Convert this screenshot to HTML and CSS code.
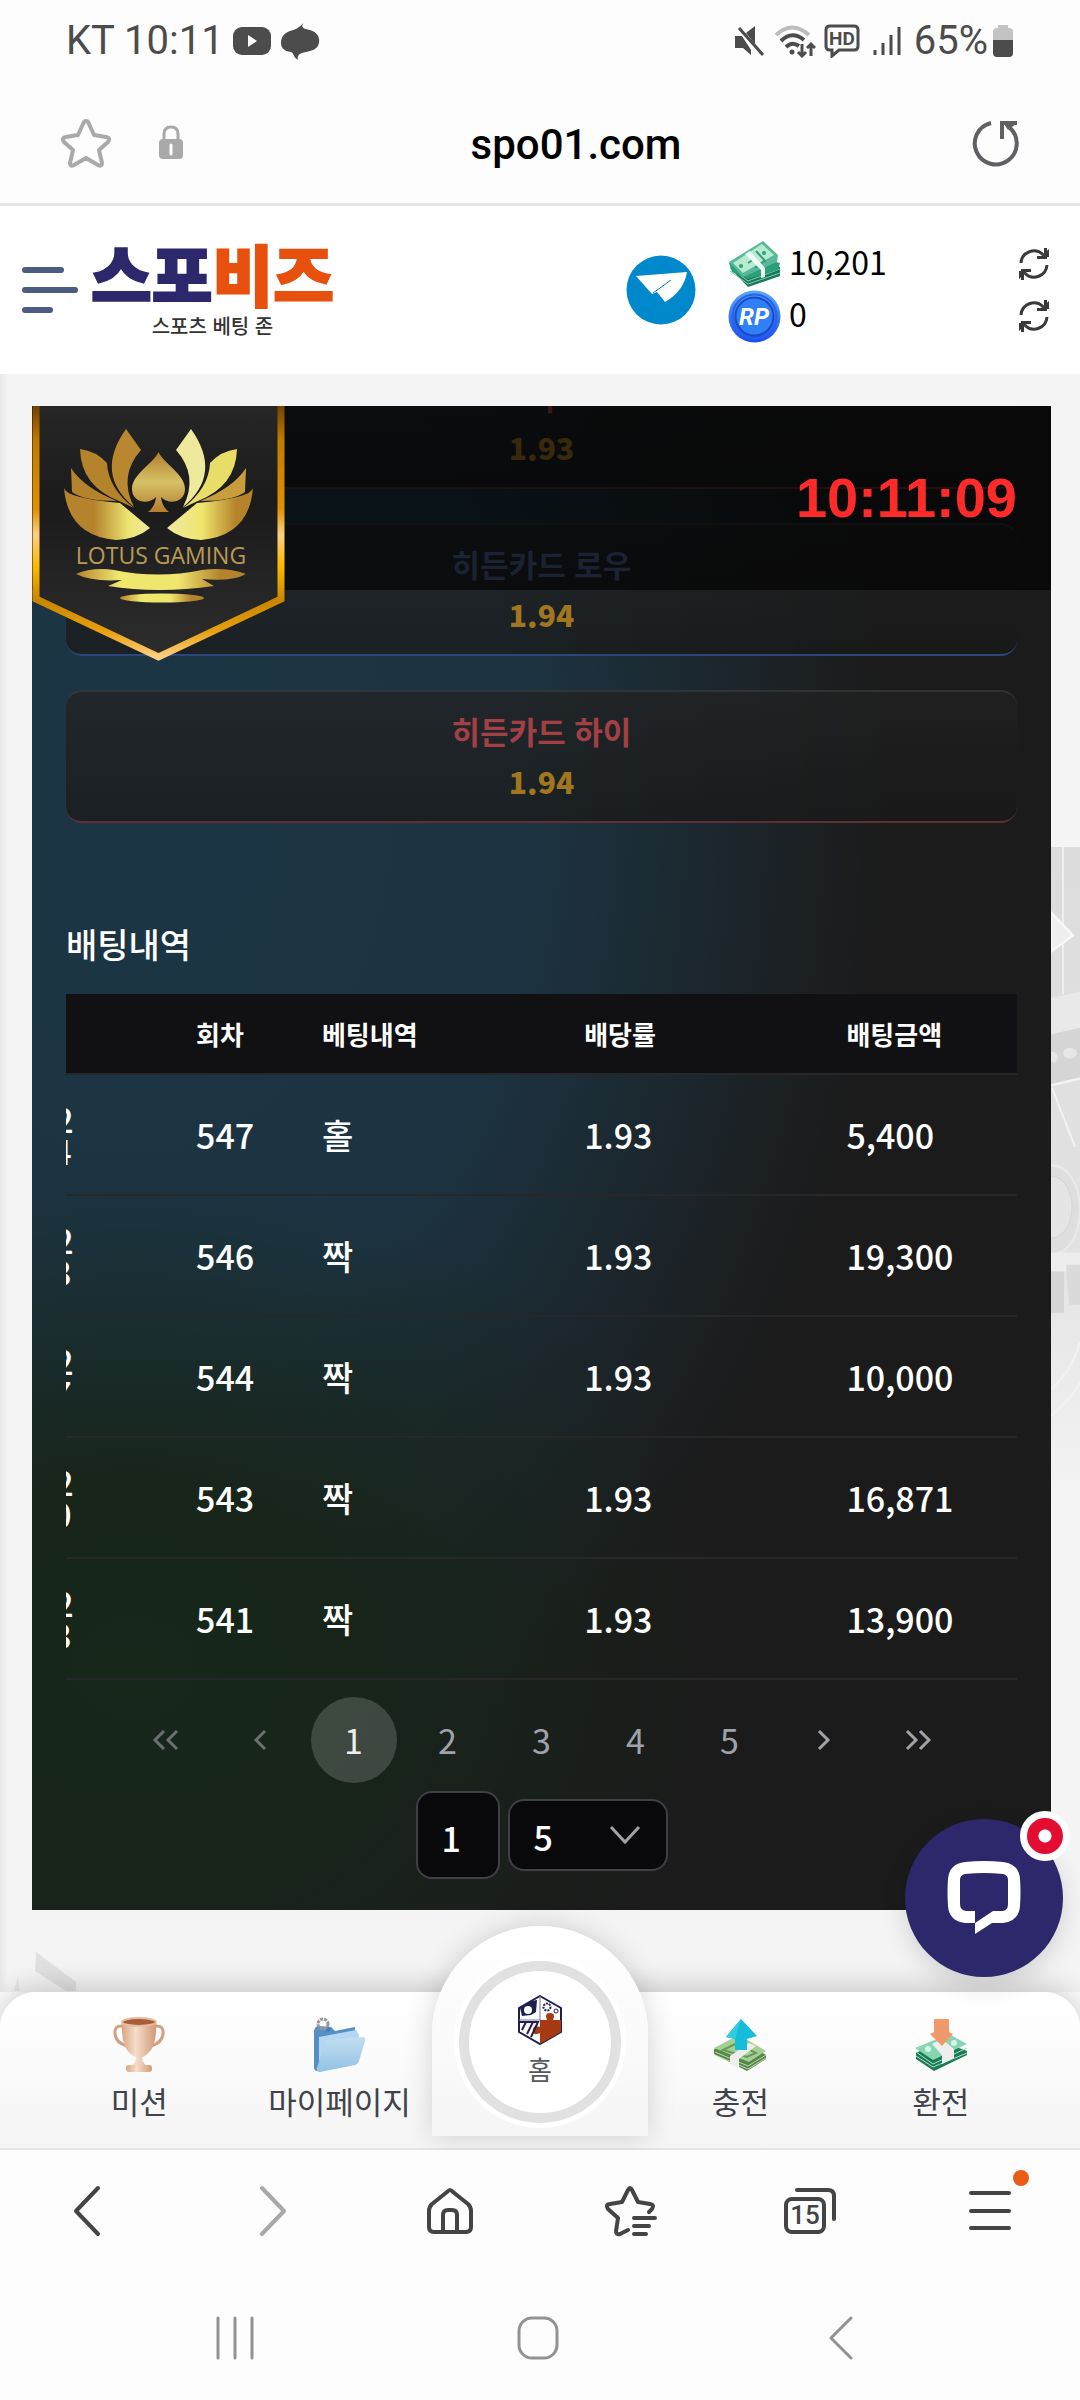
FILE: index.html
```html
<!DOCTYPE html>
<html lang="ko">
<head>
<meta charset="utf-8">
<meta name="viewport" content="width=device-width, initial-scale=1">
<title>스포비즈</title>
<link rel="stylesheet" href="styles.css">
</head>
<body>
<svg class="defs" aria-hidden="true">
  <symbol id="refresh" viewBox="0 0 32 32">
    <path d="M3 15A13 13 0 0 1 25 6.500M29 17A13 13 0 0 1 7 25.500" fill="none" stroke="#3a3a3a" stroke-width="3"/>
    <path d="M29 0V11H19V8H26V0zM3 32V21H13V24H6V32z" fill="#3a3a3a"/>
    <path d="M22 9L31 9L31 1zM10 23L1 23L1 31z" fill="#3a3a3a"/>
  </symbol>
</svg>

<div class="status-bar">
  <div class="status-group">
    <span>KT 10:11</span>
    <svg width="40" height="38" viewBox="0 0 40 38"><rect x="1" y="5" width="38" height="28" rx="9" fill="#4c4c4c"/><path d="M16 13L25 19L16 25z" fill="#fff"/></svg>
    <svg width="40" height="38" viewBox="0 0 40 38"><path d="M23 1C21 5 23 7 30 8C37 10 40 15 39 21C37 29 29 29 22 31C19 32 17 34 18 38C13 35 14 31 11 30C4 29 1 26 1 21C1 14 5 11 10 9C17 7 20 5 23 1z" fill="#4c4c4c"/></svg>
  </div>
  <div class="status-group">
    <svg width="32" height="34" viewBox="0 0 32 34"><path d="M1 12H8L17 26V31L9 24H1zM12 9L21 2V20z" fill="#4c4c4c"/><path d="M5 4L29 31" stroke="#4c4c4c" stroke-width="3"/></svg>
    <svg width="42" height="34" viewBox="0 0 42 34" fill="none" stroke-width="4"><path d="M2 11Q18 -4 35 11" stroke="#bdbdbd"/><path d="M7 17Q18 6 30 16M12 23Q18 17 25 22" stroke="#4c4c4c"/><circle cx="18" cy="28" r="2.500" fill="#4c4c4c"/><path d="M28 20V32M24 28L28 32L32 28M37 32V20M33 24L37 20L41 24" stroke="#4c4c4c" stroke-width="3"/></svg>
    <svg width="36" height="34" viewBox="0 0 36 34"><path d="M6 2H30Q34 2 34 6V22Q34 26 30 26H15L8 32V26H6Q2 26 2 22V6Q2 2 6 2z" fill="none" stroke="#4c4c4c" stroke-width="3"/><text x="18" y="21" text-anchor="middle" class="hd">HD</text></svg>
    <svg class="s-signal" width="30" height="34" viewBox="0 0 30 34" stroke="#4c4c4c" stroke-width="3"><path d="M3 26V31M11 19V31M19 11V31M27 3V31"/></svg>
    <span>65%</span>
    <svg class="s-battery" width="22" height="34" viewBox="0 0 22 34"><path d="M1 17V8Q1 4 5 4H6V1H16V4H17Q21 4 21 8V17z" fill="#c3c3c3"/><path d="M1 16H21V29Q21 33 17 33H5Q1 33 1 29z" fill="#4c4c4c"/></svg>
  </div>
</div>

<div class="address-bar">
  <div class="address-icons">
    <button type="button" aria-label="북마크"><svg width="52" height="50" viewBox="0 0 52 50"><path d="M26 3Q28 3 29 6L34 17L46 19Q51 20 48 24L39 32L42 45Q42 49 38 47L26 40L14 47Q10 49 10 45L13 32L4 24Q1 20 6 19L18 17L23 6Q24 3 26 3z" fill="none" stroke="#a9a9a9" stroke-width="4" stroke-linejoin="round"/></svg></button>
    <svg width="26" height="36" viewBox="0 0 26 36"><path d="M6 16V9Q6 2 13 2T20 9V16" fill="none" stroke="#a9a9a9" stroke-width="3"/><rect x="1" y="14" width="24" height="20" rx="4" fill="#a9a9a9"/><path d="M13 20V29" stroke="#fff" stroke-width="3" stroke-linecap="round"/></svg>
  </div>
  <div class="url">spo01.com</div>
  <button type="button" aria-label="새로고침"><svg width="48" height="48" viewBox="0 0 48 48" fill="none" stroke="#5f6064" stroke-width="4"><path d="M19 4A21 21 0 1 0 38 9" /><path d="M30 20V4H45"/><path d="M32 5H44L36 11z" fill="#5f6064" stroke="none"/></svg></button>
</div>

<header class="site-header">
  <button type="button" class="menu" aria-label="메뉴"><i></i><i></i><i></i></button>
  <a href="#" class="brand"><span class="brand-name">스포<b>비즈</b></span><span class="brand-sub">스포츠 베팅 존</span></a>
  <a href="#" class="telegram" aria-label="텔레그램"><svg width="70" height="70" viewBox="0 0 70 70"><circle cx="35" cy="35" r="34.500" fill="#0088cc"/><path d="M10 21L61 17Q58 36 39 47L31 37L26 39z" fill="#fff"/><path d="M27 38L45 25" stroke="#0088cc" stroke-width="1"/></svg></a>
  <div class="balances">
    <div class="balance">
      <svg width="53" height="48" viewBox="0 0 53 48">
        <path d="M2 28L20 47L52 36V27L22 20z" fill="#17795c"/><path d="M2 31L20 44L52 33M2 28L20 41L52 29" fill="none" stroke="#7fd0ab" stroke-width="1"/>
        <path d="M1 23L17 14L52 23L50 30L20 39L4 32z" fill="#2b9f7c"/>
        <path d="M1 22L35 1L50 15L49 22L15 37z" fill="#58b897"/><path d="M5 23L34 4L46 15L15 33z" fill="#b5ecd0"/>
        <path d="M20 23L28 18M27 28L36 21M28 11L38 22" stroke="#3c9b7c" stroke-width="2"/><circle cx="36" cy="13" r="2" fill="#2b9f7c"/><circle cx="13" cy="26" r="2" fill="#2b9f7c"/>
        <path d="M17 14L22 11L37 28V37L33 38V30z" fill="#eef9f4"/>
      </svg>
      <span>10,201</span>
      <button type="button" aria-label="머니 새로고침"><svg width="32" height="32"><use href="#refresh"/></svg></button>
    </div>
    <div class="balance">
      <svg width="53" height="53" viewBox="0 0 53 53">
        <defs><linearGradient id="coin" x2="0" y2="1"><stop offset="0" stop-color="#5aa5ff"/><stop offset="1" stop-color="#1a4bf0"/></linearGradient></defs>
        <circle cx="26.500" cy="26.500" r="26" fill="url(#coin)"/><circle cx="26.500" cy="26.500" r="22" fill="none" stroke="#2462e8" stroke-width="2"/><circle cx="26.500" cy="26.500" r="19" fill="#2f80f7" stroke="#1c49c4" stroke-width="2"/>
        <text x="26" y="35" text-anchor="middle" class="coin-text">RP</text>
      </svg>
      <span>0</span>
      <button type="button" aria-label="포인트 새로고침"><svg width="32" height="32"><use href="#refresh"/></svg></button>
    </div>
  </div>
</header>

<main class="page">
  <svg class="casino-art" width="29" height="660" viewBox="0 0 29 493" preserveAspectRatio="none" aria-hidden="true">
    <defs><linearGradient id="art" x2="0" y2="1"><stop offset="0" stop-color="#dcdcdc"/><stop offset=".6" stop-color="#e2e2e2"/><stop offset="1" stop-color="#f4f4f4"/></linearGradient></defs>
    <rect width="29" height="493" fill="url(#art)"/>
    <path d="M12 0V110" stroke="#efefef" stroke-width="2"/><path d="M0 49L22 66L0 78z" fill="#eee" stroke="#f8f8f8" stroke-width="2"/>
    <path d="M0 113L29 108V135L0 140z" fill="#e9e9e9"/><path d="M0 140L29 135V174L0 178z" fill="#d5d5d5"/>
    <ellipse cx="19" cy="154" rx="7" ry="4" fill="#e6e6e6"/><ellipse cx="2" cy="157" rx="5" ry="4" fill="#e6e6e6"/>
    <path d="M1 180L24 224M0 178L29 173" stroke="#f2f2f2" stroke-width="2"/>
    <ellipse cx="2" cy="271" rx="27" ry="33" fill="#dedede" stroke="#e9e9e9" stroke-width="2"/><ellipse cx="1" cy="269" rx="20" ry="23" fill="#e5e5e5" stroke="#d5d5d5"/>
    <path d="M0 303H29V317H0z" fill="#ededed"/><path d="M0 317H13V348H0z" fill="#d6d6d6"/><path d="M15 312H29V342H18z" fill="#dadada"/>
    <path d="M0 405Q20 392 29 370M0 425Q20 412 29 400" fill="none" stroke="#f2f2f2" stroke-width="2"/>
  </svg>
  <svg class="arrow-art" width="80" height="40" viewBox="0 0 80 40" aria-hidden="true"><path d="M36 0L76 30V39H66L35 19z" fill="#e0e0e0"/><path d="M18 24L14 39H20z" fill="#e6e6e6"/></svg>

  <section class="game">
    <div class="game-body">
      <div class="bets">
        <button type="button" class="bet red"><span>짝</span><b>1.93</b></button>
        <button type="button" class="bet blue"><span>히든카드 로우</span><b>1.94</b></button>
        <button type="button" class="bet red"><span>히든카드 하이</span><b>1.94</b></button>
      </div>
      <h2>배팅내역</h2>
      <div class="table-scroll">
        <table>
          <colgroup><col class="c-date"><col class="c-round"><col class="c-pick"><col class="c-odds"><col class="c-amount"></colgroup>
          <thead><tr><th></th><th>회차</th><th>베팅내역</th><th>배당률</th><th>배팅금액</th></tr></thead>
          <tbody>
            <tr><td class="date">05-02 10:04</td><td>547</td><td>홀</td><td>1.93</td><td>5,400</td></tr>
            <tr><td class="date">05-02 10:03</td><td>546</td><td>짝</td><td>1.93</td><td>19,300</td></tr>
            <tr><td class="date">05-02 09:57</td><td>544</td><td>짝</td><td>1.93</td><td>10,000</td></tr>
            <tr><td class="date">05-02 09:50</td><td>543</td><td>짝</td><td>1.93</td><td>16,871</td></tr>
            <tr><td class="date">05-02 09:43</td><td>541</td><td>짝</td><td>1.93</td><td>13,900</td></tr>
          </tbody>
        </table>
      </div>
      <nav class="pager" aria-label="페이지">
        <button type="button" class="dim" aria-label="처음"><svg width="28" height="22" viewBox="0 0 28 22"><path d="M12 2L3 11L12 20M25 2L16 11L25 20"/></svg></button>
        <button type="button" class="dim" aria-label="이전"><svg width="14" height="22" viewBox="0 0 14 22"><path d="M12 2L3 11L12 20"/></svg></button>
        <button type="button" class="current">1</button>
        <button type="button">2</button>
        <button type="button">3</button>
        <button type="button">4</button>
        <button type="button">5</button>
        <button type="button" aria-label="다음"><svg width="14" height="22" viewBox="0 0 14 22"><path d="M2 2L11 11L2 20"/></svg></button>
        <button type="button" aria-label="마지막"><svg width="28" height="22" viewBox="0 0 28 22"><path d="M3 2L12 11L3 20M16 2L25 11L16 20"/></svg></button>
      </nav>
      <div class="page-size">
        <input type="text" value="1" aria-label="페이지 번호">
        <div class="select"><select aria-label="페이지당 행 수"><option>5</option></select><svg width="32" height="20" viewBox="0 0 32 20"><path d="M2 2L16 17L30 2" fill="none" stroke="#a1a1aa" stroke-width="3"/></svg></div>
      </div>
    </div>

    <div class="game-head"><time>10:11:09</time></div>
    <svg class="lotus" width="253" height="264" viewBox="0 0 253 264">
      <defs>
        <linearGradient id="rim" x2="0" y2="1"><stop offset="0" stop-color="#6b3a00"/><stop offset=".15" stop-color="#c27a00"/><stop offset=".42" stop-color="#e09000"/><stop offset=".52" stop-color="#ffcf80"/><stop offset=".64" stop-color="#ffb900"/><stop offset=".78" stop-color="#c98500"/><stop offset=".9" stop-color="#e8a010"/><stop offset="1" stop-color="#ffd080"/></linearGradient>
        <linearGradient id="plate" x2="0" y2="1"><stop offset="0" stop-color="#272727"/><stop offset=".4" stop-color="#1b1b1b"/><stop offset="1" stop-color="#2d2d2d"/></linearGradient>
        <linearGradient id="gold"><stop offset="0" stop-color="#b5832b"/><stop offset=".35" stop-color="#b5832b"/><stop offset=".75" stop-color="#ece572"/><stop offset="1" stop-color="#f0eaa0"/></linearGradient>
        <linearGradient id="goldright"><stop offset="0" stop-color="#f0e9a0"/><stop offset=".4" stop-color="#efe66e"/><stop offset=".8" stop-color="#b5832b"/></linearGradient>
        <linearGradient id="spade" x2="0" y2="1"><stop offset="0" stop-color="#b07d2c"/><stop offset=".5" stop-color="#d7c267"/><stop offset="1" stop-color="#b07d2c"/></linearGradient>
        <linearGradient id="wave"><stop offset="0" stop-color="#b5832b"/><stop offset=".25" stop-color="#efe66e"/><stop offset=".6" stop-color="#efe66e"/><stop offset=".85" stop-color="#b5832b"/></linearGradient>
      </defs>
      <path d="M4 -4V193L126.500 251L249 193V-4" fill="url(#plate)" stroke="url(#rim)" stroke-width="7"/>
      <path d="M32 82Q34 92 88 97L118 122Q105 133 84 134Q36 130 32 82z" fill="url(#gold)"/>
      <path d="M39 62Q52 82 85 95Q52 95 40 86z" fill="#b5832b"/>
      <path d="M48 43Q64 45 75 57Q76 82 102 102Q94 98 87 95Q49 80 48 43z" fill="#b5832b"/>
      <path d="M94 23L109 44Q86 70 102 101Q62 68 94 23z" fill="#b9872f"/>
      <path d="M221 82Q219 92 165 97L135 122Q148 133 169 134Q217 130 221 82z" fill="url(#goldright)"/>
      <path d="M214 62Q201 82 168 95Q201 95 213 86z" fill="#c99d3c"/>
      <path d="M205 43Q189 45 178 57Q177 82 151 102Q159 98 166 95Q204 80 205 43z" fill="#e8dd66"/>
      <path d="M159 23L144 44Q167 70 151 101Q191 68 159 23z" fill="#efe99b"/>
      <path d="M126.500 46C133 59 153 68 153 83C153 97 136 99 129 91Q130 101 137 106H116Q123 101 124 91C117 99 100 97 100 83C100 68 120 59 126.500 46z" fill="url(#spade)"/>
      <text x="129" y="158" text-anchor="middle" class="lotus-text">LOTUS GAMING</text>
      <path d="M44 168Q60 161 82 164Q126 173 170 164Q195 161 214 168Q200 176 170 173L182 180Q126 188 76 180L90 174Q60 176 44 168z" fill="url(#wave)"/>
      <ellipse cx="130" cy="192" rx="42" ry="4.500" fill="url(#wave)"/>
    </svg>
  </section>

  <button type="button" class="chat" aria-label="상담">
    <svg width="76" height="74" viewBox="0 0 76 74"><path d="M19 1Q38 -1 57 1Q73 3 74 18Q75 31 74 45Q73 60 57 62H46L29 73V62H19Q3 60 2 45Q1 31 2 18Q3 3 19 1zM19 13Q14 14 14 19V43Q14 49 20 50H29V62L47 50H57Q62 49 62 43V19Q62 14 57 13Q38 11 19 13z" fill="#fff" fill-rule="evenodd"/></svg>
    <span class="badge"></span>
  </button>
</main>

<nav class="tabbar">
  <a href="#"><svg width="54" height="56" viewBox="0 0 54 56">
    <defs><linearGradient id="cup"><stop offset="0" stop-color="#d9a582"/><stop offset=".4" stop-color="#f6ddca"/><stop offset="1" stop-color="#cf9a78"/></linearGradient></defs>
    <path d="M11 9Q2 8 3 17Q4 26 15 29M43 9Q52 8 51 17Q50 26 39 29" fill="none" stroke="#d2a081" stroke-width="3"/>
    <path d="M10 4H44Q45 24 39 33Q33 40 30 40Q30 46 35 49H19Q24 46 24 40Q21 40 15 33Q9 24 10 4z" fill="url(#cup)"/><ellipse cx="27" cy="5" rx="17" ry="4" fill="#a85c3a" stroke="#e5bda0" stroke-width="2"/><rect x="14" y="48" width="26" height="7" rx="3" fill="url(#cup)"/></svg><span>미션</span></a>
  <a href="#"><svg width="54" height="56" viewBox="0 0 54 56">
    <defs><linearGradient id="folder" x2="0" y2="1"><stop offset="0" stop-color="#c3def0"/><stop offset="1" stop-color="#92c2e4"/></linearGradient></defs>
    <path d="M1 14Q2 9 6 9L18 10L22 14L42 10V46L4 54Q1 54 1 50z" fill="#5490c6"/><path d="M6 20L43 13L46 18V44L6 50z" fill="#b4d6f2"/>
    <path d="M12 26Q13 23 16 23L50 20Q53 20 52 24L46 44Q45 47 42 48L7 55Q3 55 4 51z" fill="url(#folder)"/><circle cx="10" cy="7" r="5" fill="none" stroke="#999" stroke-width="3" stroke-dasharray="3 1"/><path d="M14 14L17 11" stroke="#3a7cc0" stroke-width="3"/></svg><span>마이페이지</span></a>
  <a href="#" class="home"><span class="ring"><svg width="44" height="50" viewBox="0 0 44 50">
    <path d="M22 1L43 13V37L22 49L1 37V13z" fill="#fff" stroke="#211f4f" stroke-width="2"/><path d="M22 25H29Q26 18 32 18T35 25H43V37L22 49V38Q14 42 15 34Q16 30 22 32z" fill="#a63a12"/>
    <path d="M22 1V25H1" fill="none" stroke="#77779a"/><path d="M2 13L13 6L19 5L18 17L13 20L4 21z" fill="#211f4f"/><circle cx="10" cy="15" r="4" fill="#fff"/><circle cx="29" cy="12" r="3.500" fill="none" stroke="#211f4f" stroke-width="2" stroke-dasharray="2 1"/><circle cx="38" cy="16" r="2" fill="none" stroke="#211f4f"/>
    <path d="M2 27H8L4 35M9 27H15L9 39M15 27H20L13 42" fill="none" stroke="#211f4f" stroke-width="2"/></svg><span>홈</span></span></a>
  <a href="#"><svg width="54" height="56" viewBox="0 0 54 56">
    <path d="M1 32L28 22L53 38V42L34 54L1 37z" fill="#57874b"/><path d="M1 31L26 18L53 34L36 45z" fill="#a6cf93"/><path d="M2 35L35 49L53 38M2 38L35 52L53 41" fill="none" stroke="#b9dba8"/><path d="M10 33L24 26L43 36L34 40z" fill="none" stroke="#68995b" stroke-width="2"/><path d="M17 39L36 26L43 29L26 42V51L17 47z" fill="#eee"/>
    <path d="M28 2L44 19L34 22V33H22V22L13 20z" fill="#16bdd8"/><path d="M28 2L13 20L22 22z" fill="#2fcbe0"/></svg><span>충전</span></a>
  <a href="#"><svg width="54" height="56" viewBox="0 0 54 56">
    <path d="M2 36L26 24L53 34V38L20 54L2 42z" fill="#1d7a56"/><path d="M1 31L35 17L53 27L19 43z" fill="#86d6b1"/><path d="M2 35L19 47L53 31M2 39L19 50L53 36" fill="none" stroke="#a9e3c8"/><circle cx="14" cy="32" r="3" fill="#d8f5e8"/><circle cx="40" cy="26" r="3" fill="#d8f5e8"/><path d="M18 27L28 22L40 32V41L28 47V38z" fill="#eee"/>
    <path d="M20 2H35V15L39 17L28 29L16 17L20 15z" fill="#f09a6c"/></svg><span>환전</span></a>
</nav>

<nav class="browser-bar">
  <button type="button" aria-label="뒤로"><svg width="54" height="54" viewBox="0 0 54 54"><path d="M35 4L13 27L35 50"/></svg></button>
  <button type="button" aria-label="앞으로" class="off"><svg width="54" height="54" viewBox="0 0 54 54"><path d="M19 4L41 27L19 50"/></svg></button>
  <button type="button" aria-label="홈"><svg width="54" height="54" viewBox="0 0 54 54"><path d="M27 6Q28 6 30 8L45 20Q48 23 48 27V43Q48 48 43 48H11Q6 48 6 43V27Q6 23 9 20L24 8Q26 6 27 6zM20 48V31Q20 26 25 26H29Q34 26 34 31V48"/></svg></button>
  <button type="button" aria-label="북마크 목록"><svg width="54" height="54" viewBox="0 0 54 54"><path d="M25 46L17 50Q13 51 13 47L15 34L5 25Q2 20 7 20L19 18L25 6Q27 2 29 6L35 18L47 20Q52 21 49 25L46 28M31 34H52M31 42H46M31 50H43"/></svg></button>
  <button type="button" aria-label="탭"><svg width="54" height="54" viewBox="0 0 54 54"><rect x="3" y="15" width="38" height="33" rx="6"/><path d="M14 6H45Q51 6 51 12V35"/><text x="22" y="40" text-anchor="middle">15</text></svg></button>
  <button type="button" aria-label="메뉴"><svg width="54" height="54" viewBox="0 0 54 54"><path d="M8 9H46M8 27H46M8 44H46"/></svg><span class="dot"></span></button>
</nav>

<nav class="system-bar">
  <button type="button" aria-label="최근 앱"><svg width="44" height="44" viewBox="0 0 44 44"><path d="M5 2V42M22 2V42M39 2V42"/></svg></button>
  <button type="button" aria-label="홈 화면"><svg width="44" height="44" viewBox="0 0 44 44"><rect x="3" y="2" width="38" height="40" rx="13"/></svg></button>
  <button type="button" aria-label="이전"><svg width="44" height="44" viewBox="0 0 44 44"><path d="M32 2L12 22L32 42"/></svg></button>
</nav>
</body>
</html>
```

FILE: styles.css
```css
* { box-sizing: border-box; }

body {
  margin: 0;
  min-height: 100vh;
  display: flex;
  flex-direction: column;
  background: #fdfdfd;
  font-family: "Noto Sans CJK KR", sans-serif;
  color: #000;
}

button {
  border: 0;
  padding: 0;
  background: none;
  font: inherit;
  color: inherit;
}

a { color: inherit; text-decoration: none; }
svg { display: block; flex: none; }
.defs { position: absolute; width: 0; height: 0; }

/* phone status bar */
.status-bar {
  display: flex;
  justify-content: space-between;
  align-items: center;
  height: 82px;
  padding: 0 66px;
  font: 40px/48px Roboto, sans-serif;
  color: #4c4c4c;
}
.status-group { display: flex; align-items: center; gap: 8px; }
.status-group .s-signal { margin: 0 4px; }
.status-group .s-battery { margin-left: -4px; }
.hd { font: 700 19px Roboto, sans-serif; fill: #4c4c4c; }

/* address bar */
.address-bar {
  display: grid;
  grid-template-columns: 1fr auto 1fr;
  align-items: center;
  height: 124px;
  padding: 0 60px;
  border-bottom: 3px solid #e5e5e5;
}
.address-icons { display: flex; align-items: center; gap: 46px; }
.url { padding: 4px 0 0 72px; font: 500 42px/50px Roboto, sans-serif; }
.address-bar > button { justify-self: end; }

/* site header */
.site-header {
  display: flex;
  align-items: center;
  height: 168px;
  padding: 0 30px 0 22px;
  background: #fff;
}
.menu { display: flex; flex-direction: column; gap: 14px; width: 56px; }
.menu i { height: 6px; border-radius: 3px; background: #4b5b82; }
.menu i:nth-child(1) { width: 42px; }
.menu i:nth-child(2) { width: 56px; }
.menu i:nth-child(3) { width: 31px; }
.brand {
  display: flex;
  flex-direction: column;
  align-items: center;
  gap: 4px;
  margin-left: 13px;
  margin-right: auto;
}
.brand-name {
  font-size: 66px;
  line-height: 68px;
  font-weight: 900;
  color: #2d276b;
  -webkit-text-stroke: 2px currentColor;
}
.brand-name b { font-weight: 900; color: #e8500e; }
.brand-sub { font-size: 20px; line-height: 32px; font-weight: 500; color: #333; }
.telegram { margin-right: 32px; }
.balances { width: 322px; }
.balance { display: flex; align-items: center; gap: 8px; height: 52px; font-size: 32px; line-height: 40px; }
.balance span { padding-bottom: 6px; }
.balance button { margin-left: auto; }
.coin-text { font: italic 700 24px Roboto, sans-serif; fill: #fff; }

/* page with the game frame */
.page {
  position: relative;
  padding: 32px 29px 82px 32px;
  background: linear-gradient(90deg, #e8e8e8, #f4f4f4 8px);
}
.casino-art { position: absolute; right: 0; top: 473px; }
.arrow-art { position: absolute; left: 0; bottom: 0; }

.game {
  position: relative;
  overflow: hidden;
  background:
    radial-gradient(ellipse 600px 500px at 10% 84%, #17271a 0, #17251a 35%, rgba(23, 37, 26, 0) 100%),
    radial-gradient(ellipse 750px 1040px at 10% 26%, #1c3544 0, #1c3442 52%, rgba(27, 27, 27, 0) 100%),
    #1b1b1b;
}
.game-head {
  position: absolute;
  inset: 0 0 auto;
  height: 184px;
  display: flex;
  align-items: center;
  justify-content: flex-end;
  padding-right: 34px;
  background: rgba(0, 0, 0, .65);
  color: #ff2b2b;
}
.game-head time { font: 700 56px/72px "Liberation Sans", sans-serif; }
.lotus { position: absolute; left: 0; top: 0; }
.lotus-text { font: 23px "Open Sans", sans-serif; fill: #b99a55; }

.game-body { margin-top: -50px; padding: 0 34px 31px; color: #fff; }
.bets { display: flex; flex-direction: column; gap: 34px; }
.bet {
  display: flex;
  flex-direction: column;
  align-items: center;
  height: 133px;
  padding-top: 14px;
  border-top: 2px solid rgba(255, 255, 255, .1);
  border-bottom: 2px solid;
  border-radius: 16px;
  background: linear-gradient(rgba(34, 34, 34, .75), rgba(25, 25, 25, .75));
  font-size: 31px;
  line-height: 50px;
  font-weight: 700;
}
.bet.red { border-bottom-color: #5f2f33; }
.bet.blue { border-bottom-color: #2a467a; }
.bet.red span { color: #a34045; }
.bet.blue span { color: #4a6192; }
.bet b { font-size: 30px; color: #a0761f; }

h2 { margin: 96px 0 25px; font-size: 34px; line-height: 50px; font-weight: 500; }

/* the table is wider than its box and stays scrolled to the right */
.table-scroll { overflow: hidden; }
table {
  width: calc(100% + 98px);
  margin-left: -98px;
  table-layout: fixed;
  border-collapse: separate;
  border-spacing: 0;
}
.c-date { width: 208px; }
.c-round { width: 12%; }
.c-pick, .c-odds { width: 25%; }
th, td { padding: 0 20px; text-align: left; border-bottom: 2px solid #27272a; white-space: nowrap; }
th { height: 81px; background: #111113; font-size: 26px; line-height: 40px; font-weight: 700; }
td { height: 121px; font-size: 34px; line-height: 50px; font-weight: 500; }
td.date { padding: 0 90px 0 16px; line-height: 32px; white-space: normal; }

.pager { display: flex; justify-content: center; gap: 8px; margin-top: 17px; }
.pager button {
  display: grid;
  place-items: center;
  width: 86px;
  height: 86px;
  border-radius: 50%;
  font-size: 34px;
  line-height: 50px;
  color: #a1a1aa;
}
.pager svg { fill: none; stroke: #a1a1aa; stroke-width: 3; }
.pager .dim { opacity: .6; }
.pager .current { background: rgba(255, 255, 255, .17); color: #eee; }

.page-size { display: flex; justify-content: center; align-items: center; gap: 8px; margin-top: 8px; }
.page-size input,
.page-size select {
  appearance: none;
  border: 2px solid #3f3f46;
  border-radius: 16px;
  background: #09090b;
  color: #fff;
  font: 500 34px/50px "Noto Sans CJK KR", sans-serif;
}
.page-size input { width: 84px; height: 88px; padding: 4px 24px 0; }
.select { display: grid; align-items: center; }
.select select { grid-area: 1 / 1; width: 160px; height: 72px; padding: 4px 24px 0; }
.select svg { grid-area: 1 / 1; justify-self: end; margin-right: 27px; pointer-events: none; }

.chat {
  position: absolute;
  right: 17px;
  bottom: 15px;
  z-index: 3;
  display: grid;
  place-items: center;
  width: 158px;
  height: 158px;
  border-radius: 50%;
  background: #2d276b;
  box-shadow: 0 8px 24px rgba(0, 0, 0, .14);
}
.badge {
  position: absolute;
  right: -7px;
  top: -8px;
  width: 50px;
  height: 50px;
  border: 7px solid #fff;
  border-radius: 50%;
  background: radial-gradient(circle, #fff 6px, #e20d30 7px);
}

/* site tab bar */
.tabbar {
  position: relative;
  z-index: 2;
  display: grid;
  grid-template-columns: repeat(5, minmax(0, 1fr));
  height: 158px;
  padding: 0 39px;
  border-radius: 36px 36px 0 0;
  border-bottom: 2px solid #e5e5e5;
  background: linear-gradient(#fff, #f5f5f5);
  box-shadow: 0 -4px 28px rgba(0, 0, 0, .2);
  clip-path: inset(-120px 0 0);
}
.tabbar > a {
  display: flex;
  flex-direction: column;
  align-items: center;
  gap: 6px;
  padding-top: 25px;
  font-size: 31px;
  line-height: 44px;
  color: #3f434b;
  white-space: nowrap;
}
.tabbar > .home {
  justify-self: center;
  justify-content: flex-end;
  width: 216px;
  height: 210px;
  margin-top: -66px;
  padding: 0 0 13px;
  border-radius: 108px 108px 0 0;
  background: linear-gradient(#fff, #f6f6f6);
  box-shadow: 0 0 28px rgba(0, 0, 0, .16);
}
.ring {
  display: flex;
  flex-direction: column;
  align-items: center;
  width: 162px;
  height: 162px;
  padding-top: 24px;
  border: 10px solid #e1e1e1;
  border-radius: 50%;
  background: #fff;
  box-shadow: 0 0 0 5px #fff;
  font-size: 26px;
  line-height: 48px;
  color: #55585c;
}

/* browser toolbar and system keys */
.browser-bar { display: grid; grid-template-columns: repeat(6, 1fr); height: 122px; }
.browser-bar button { position: relative; display: grid; place-items: center; }
.browser-bar svg { fill: none; stroke: #444; stroke-width: 4; stroke-linecap: round; stroke-linejoin: round; }
.browser-bar .off svg { stroke: #a8a8a8; }
.browser-bar text { font: 500 26px Roboto, sans-serif; fill: #444; stroke: none; }
.dot {
  position: absolute;
  left: calc(50% + 23px);
  top: 20px;
  width: 16px;
  height: 16px;
  border-radius: 50%;
  background: #ea5b16;
}
.system-bar { display: grid; grid-template-columns: repeat(3, 1fr); height: 128px; padding: 4px 88px 0 84px; }
.system-bar button { display: grid; place-items: center; }
.system-bar svg { fill: none; stroke: #929292; stroke-width: 3; stroke-linecap: round; stroke-linejoin: round; }
```
